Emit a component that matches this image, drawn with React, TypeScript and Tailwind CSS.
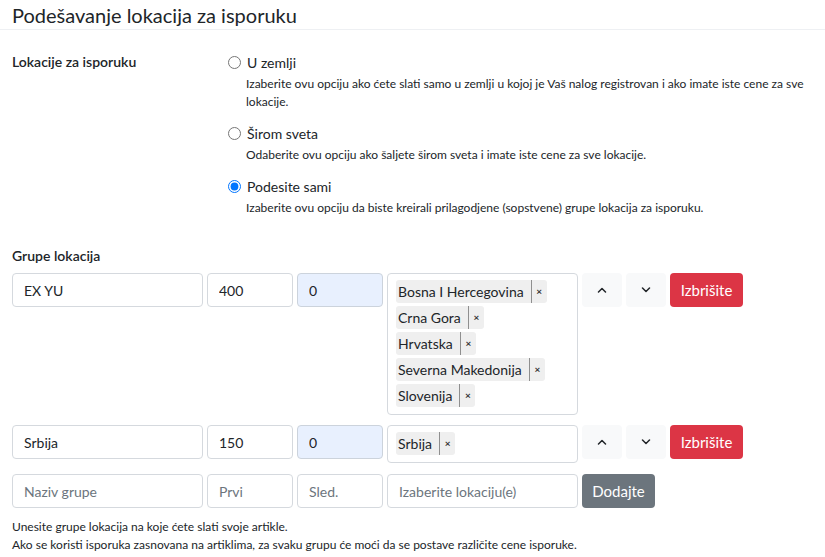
function Chevron({ up }: { up?: boolean }) {
  return (
    <svg width="10" height="6" viewBox="0 0 10 6" fill="none" stroke="#212529" strokeWidth="1.5" strokeLinecap="round" strokeLinejoin="round">
      {up ? <path d="M1.5 5 L5 1.5 L8.5 5" /> : <path d="M1.5 1 L5 4.5 L8.5 1" />}
    </svg>
  );
}

function Chip({ label }: { label: string }) {
  return (
    <div className="flex h-[23px] w-fit items-stretch rounded-[3px] bg-[#efefef] text-[14px] text-[#212529]">
      <span className="flex items-center pl-[2px] pr-[7px]">{label}</span>
      <span className="w-px bg-[#8f8f8f]" />
      <span className="flex w-[15px] items-center justify-center text-[10px] font-bold text-[#333]">×</span>
    </div>
  );
}

function Radio({ checked, label, help }: { checked?: boolean; label: string; help: React.ReactNode }) {
  return (
    <div className="flex flex-col">
      <label className="flex h-[20px] items-center gap-[6px] text-[14px] text-[#212529]">
        <input type="radio" name="lok" defaultChecked={checked} className="m-0 h-[13px] w-[13px] accent-[#0075ff]" />
        <span>{label}</span>
      </label>
      <div className="mt-[3px] pl-[18px] text-[12px] leading-[18px] text-[#212529]">{help}</div>
    </div>
  );
}

const baseInput =
  "h-[34px] rounded-[4px] border px-[11px] text-[14px] text-[#212529] outline-none placeholder:text-[#6c757d]";
const inputCls = `${baseInput} border-[#d5d9de] bg-white`;
const autoCls = `${baseInput} border-[#ccd3dc] bg-[#e8f0fe]`;

function Row({ name, first, chips }: { name: string; first: string; chips: string[] }) {
  return (
    <div className="flex items-start gap-[4px]">
      <input className={`${inputCls} w-[191px]`} defaultValue={name} />
      <input className={`${inputCls} w-[86px]`} defaultValue={first} />
      <input className={`${autoCls} w-[86px]`} defaultValue="0" />
      <div className="flex w-[191px] flex-col gap-[3px] rounded-[4px] border border-[#d5d9de] pt-[6px] pr-[8px] pb-[7px] pl-[8px]">
        {chips.map((c) => (
          <Chip key={c} label={c} />
        ))}
      </div>
      <button className="flex h-[34px] w-[40px] items-center justify-center rounded-[4px] bg-[#f8f9fa]">
        <Chevron up />
      </button>
      <button className="flex h-[34px] w-[40px] items-center justify-center rounded-[4px] bg-[#f8f9fa]">
        <Chevron />
      </button>
      <button className="flex h-[34px] w-[73px] items-center justify-center rounded-[4px] bg-[#dc3545] text-[15px] text-white">
        Izbrišite
      </button>
    </div>
  );
}

export default function App() {
  return (
    <div className="h-[557px] w-[825px] overflow-hidden bg-white text-[#212529] [font-family:Lato,sans-serif]">
      <div className="flex h-[30px] items-center border-b border-[#eef0f3] px-[12px] text-[20px]">
        Podešavanje lokacija za isporuku
      </div>
      <div className="flex px-[12px] pt-[22px]">
        <div className="h-[20px] w-[216px] text-[14px] leading-[20px] font-semibold">Lokacije za isporuku</div>
        <div className="flex flex-col gap-[12px]">
          <Radio
            label="U zemlji"
            help={
              <>
                Izaberite ovu opciju ako ćete slati samo u zemlji u kojoj je Vaš nalog registrovan i ako imate iste cene za sve
                <br />
                lokacije.
              </>
            }
          />
          <Radio label="Širom sveta" help="Odaberite ovu opciju ako šaljete širom sveta i imate iste cene za sve lokacije." />
          <Radio
            checked
            label="Podesite sami"
            help="Izaberite ovu opciju da biste kreirali prilagodjene (sopstvene) grupe lokacija za isporuku."
          />
        </div>
      </div>
      <div className="px-[12px] pt-[29px]">
        <div className="h-[20px] text-[14px] leading-[20px] font-semibold">Grupe lokacija</div>
        <div className="mt-[7px] flex flex-col">
          <Row
            name="EX YU"
            first="400"
            chips={["Bosna I Hercegovina", "Crna Gora", "Hrvatska", "Severna Makedonija", "Slovenija"]}
          />
          <div className="mt-[10px]">
            <Row name="Srbija" first="150" chips={["Srbija"]} />
          </div>
          <div className="mt-[11px] flex items-start gap-[4px]">
            <input className={`${inputCls} w-[191px]`} placeholder="Naziv grupe" />
            <input className={`${inputCls} w-[86px]`} placeholder="Prvi" />
            <input className={`${inputCls} w-[86px]`} placeholder="Sled." />
            <input className={`${inputCls} w-[191px]`} placeholder="Izaberite lokaciju(e)" />
            <button className="flex h-[34px] w-[73px] items-center justify-center rounded-[4px] bg-[#6c757d] text-[15px] text-white">
              Dodajte
            </button>
          </div>
        </div>
        <div className="mt-[10px] text-[12px] leading-[18px]">
          Unesite grupe lokacija na koje ćete slati svoje artikle.
          <br />
          Ako se koristi isporuka zasnovana na artiklima, za svaku grupu će moći da se postave različite cene isporuke.
        </div>
      </div>
    </div>
  );
}
